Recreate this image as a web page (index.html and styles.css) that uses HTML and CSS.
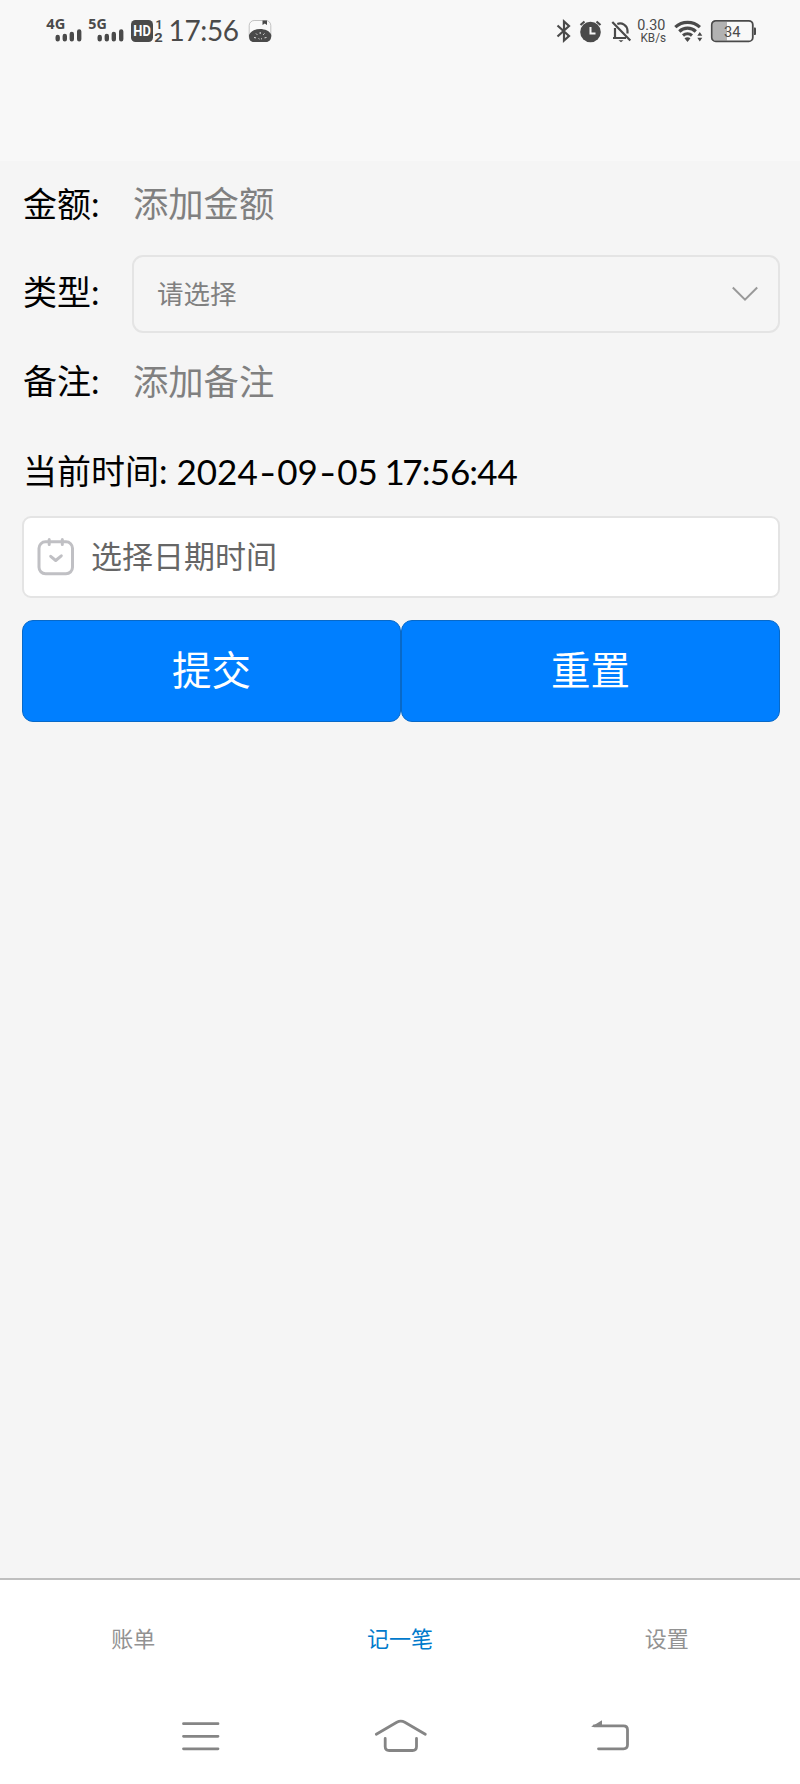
FILE: index.html
```html
<!DOCTYPE html>
<html lang="zh-CN">
<head>
<meta charset="utf-8">
<title>记一笔</title>
<link rel="stylesheet" href="styles.css">
</head>
<body>
<header class="header">
  <div class="status">
    <svg width="46" height="64" viewBox="40 0 46 64"><text x="46.3" y="29.3" class="net" textLength="19" lengthAdjust="spacingAndGlyphs">4G</text><path class="bars" d="M57.7 37v2.300M64.8 36v3.300M71.8 34v5.300M79.2 31.500v7.800"/></svg>
    <svg width="40" height="64" viewBox="86 0 40 64"><text x="88.3" y="29.3" class="net" textLength="18.5" lengthAdjust="spacingAndGlyphs">5G</text><path class="bars" d="M99.7 37v2.300M106.8 36v3.300M113.8 34v5.300M121.2 31.500v7.800"/></svg>
    <svg width="40" height="64" viewBox="126 0 40 64"><rect x="131" y="20" width="22" height="22" rx="4.5" class="solid"/><text x="133.3" y="36.3" class="hd" textLength="17.5" lengthAdjust="spacingAndGlyphs">HD</text><text x="155.5" y="29" class="sim">1</text><text x="154.3" y="41.7" class="sim" textLength="8.5" lengthAdjust="spacingAndGlyphs">2</text></svg>
    <svg width="76" height="64" viewBox="166 0 76 64"><text x="168.5" y="41.300" class="clock" textLength="70.5" lengthAdjust="spacing">17:56</text></svg>
    <svg width="38" height="64" viewBox="242 0 38 64"><rect x="249.2" y="20.5" width="21.6" height="21" rx="5" class="cup"/><path class="solid" d="M262.5 20.500h4.500v4.500l-2.200-1.500-2.300 1.500zM249 35c2-4 6-6 11-6s10 2 11.300 6c0 5-2.300 7-5.300 7h-12c-3.500 0-5-2-5-7z"/><path class="seeds" d="M254 37.500l2 .4M256 33.500l1.300 1.300M260.200 32v2M264.500 33.500l-1.300 1.300M266.500 37.500l-2 .4M258.500 38.500l1 .6M262 38.500l-1 .6"/></svg>
    <span class="spacer"></span>
    <svg width="26" height="64" viewBox="550 0 26 64"><path class="line" d="M557.500 25.500l11.500 10.500-5 4.500v-19l5 4.500-11.500 10.500"/></svg>
    <svg width="32" height="64" viewBox="576 0 32 64"><circle cx="590.500" cy="32" r="10.300" class="solid"/><path class="line" d="M580.500 25l4-3.500M600.500 25l-4-3.500"/><path class="hands" d="M590.500 27v6.500h5"/></svg>
    <svg width="26" height="64" viewBox="608 0 26 64"><path class="line" d="M612.300 22l18 18.500M615 28v10h11M613 38h2M617.300 24a7.500 7.500 0 0 1 10.200 6.500v3"/><path class="solid" d="M618.500 40.200h5l-2.500 2z"/></svg>
    <svg width="36" height="64" viewBox="634 0 36 64"><text x="637.300" y="30.300" class="speed" textLength="28" lengthAdjust="spacingAndGlyphs">0.30</text><text x="640.500" y="42" class="unit" textLength="25.500" lengthAdjust="spacingAndGlyphs">KB/s</text></svg>
    <svg width="36" height="64" viewBox="670 0 36 64"><path class="wave" d="M675.300 27.200a18 18 0 0 1 24.600 0M679.300 31.500a12 12 0 0 1 16.500 0M683 35.500a7 7 0 0 1 9 0"/><path class="solid" d="M684.500 38.300q3-2 6 0l-3 3.700zM697.300 35.800l2.500-3.800 2.500 3.800zM697.300 37.700l2.500 3.800 2.500-3.800z"/></svg>
    <svg width="56" height="64" viewBox="706 0 56 64"><rect x="713" y="22" width="14" height="18.500" class="level"/><rect x="711.800" y="20.800" width="41" height="20.600" rx="4" class="cell"/><path class="solid" d="M754 27.500h1q1 0 1 1v5.500q0 1-1 1h-1z"/><text x="724" y="36.500" class="percent" textLength="16.500" lengthAdjust="spacingAndGlyphs">34</text></svg>
  </div>
</header>

<main class="form">
  <div class="row">
    <label class="label">金额<span class="colon">:</span></label>
    <div class="input">添加金额</div>
  </div>
  <div class="row">
    <label class="label">类型<span class="colon">:</span></label>
    <div class="select">
      <span>请选择</span>
      <svg width="26" height="16" viewBox="0 0 26 16"><path class="chevron" d="M.8 1.500L13 13.600 25.200 1.500"/></svg>
    </div>
  </div>
  <div class="row">
    <label class="label">备注<span class="colon">:</span></label>
    <div class="input">添加备注</div>
  </div>
  <div class="now"><span>当前时间<span class="colon">:</span></span><span class="date">2024<span class="dash">-</span>09<span class="dash">-</span>05</span><span class="time"><span class="one">1</span>7<span class="sep">:</span>56<span class="sep">:</span>44</span></div>
  <div class="picker">
    <svg width="38" height="38" viewBox="0 0 38 38"><rect x="2" y="3.800" width="33.500" height="32" rx="6.500" class="cal"/><path class="cal" d="M12.200 1.500v5M25.300 1.500v5M13.700 18.300l5 4.200 5.600-4.700"/></svg>
    <span>选择日期时间</span>
  </div>
  <div class="actions">
    <button class="button">提交</button>
    <button class="button">重置</button>
  </div>
</main>

<nav class="tabs">
  <a class="tab">账单</a>
  <a class="tab active">记一笔</a>
  <a class="tab">设置</a>
</nav>
<footer class="system">
  <svg width="40" height="36" viewBox="181 1719 40 36"><path class="key" d="M183.500 1724.700h34.500M183.500 1737.300h34.500M183.500 1749.800h34.500"/></svg>
  <svg class="home" width="56" height="36" viewBox="373 1719 56 36"><path class="key" d="M376.300 1735.200l20.500-12q4-2.200 8 0l20.500 12M385.200 1739.500v8q0 4 4 4h23.300q4 0 4-4v-8"/></svg>
  <svg width="42" height="36" viewBox="590 1719 42 36"><path class="key" d="M594 1726.800h29.500q4 0 4 4v15q0 4-4 4h-25"/><path class="arrow" d="M591 1728l11-6.800v6.800z"/></svg>
</footer>
</body>
</html>
```
FILE: styles.css
```css
* { box-sizing: border-box; }
body {
  margin: 0;
  height: 1784px;
  display: flex;
  flex-direction: column;
  overflow: hidden;
  background: #f5f5f5;
  color: #000;
  font-family: Lato, "Noto Sans CJK SC", sans-serif;
}
svg { display: block; flex: none; }
.header { height: 161px; flex: none; background: #f8f8f8; }
.status { display: flex; height: 64px; padding-left: 40px; padding-right: 38px; }
.spacer { flex: 1; }
.solid { fill: #4a4a4a; }
.line { fill: none; stroke: #4a4a4a; stroke-width: 2.2; }
.bars { fill: none; stroke: #4a4a4a; stroke-width: 4.4; stroke-linecap: round; }
.net { font: 700 15px "Noto Sans", sans-serif; fill: #4a4a4a; }
.hd { font: 700 14px Roboto, sans-serif; fill: #fff; }
.sim { font: 700 12px Roboto, sans-serif; fill: #4a4a4a; }
.clock { font: 400 28px Lato, sans-serif; fill: #4a4a4a; }
.cup { fill: #fafafa; stroke: #aaa; stroke-width: .7; }
.seeds { stroke: #ddd; stroke-width: 1; fill: none; }
.hands { fill: none; stroke: #f7f7f7; stroke-width: 2; }
.speed { font: 400 14.5px Roboto, sans-serif; fill: #4a4a4a; }
.unit { font: 400 12px Roboto, sans-serif; fill: #4a4a4a; }
.wave { fill: none; stroke: #4a4a4a; stroke-width: 3.2; }
.level { fill: #b2b2b2; }
.cell { fill: none; stroke: #4a4a4a; stroke-width: 1.8; }
.percent { font: 400 14.5px Roboto, sans-serif; fill: #4a4a4a; }

.form { flex: 1; padding: 0 20px 0 22px; }
.row { display: flex; align-items: center; height: 89px; }
.row:first-child { height: 88px; }
.label { width: 110px; padding: 0 0 3px 1px; font-size: 34px; line-height: 50px; flex: none; }
.colon { font-family: Lato, sans-serif; }
.input { padding: 0 0 2px 1px; font-size: 35.3px; line-height: 52px; color: #808080; }
.select {
  flex: 1;
  height: 78px;
  display: flex;
  align-items: center;
  justify-content: space-between;
  padding: 0 20px 0 23px;
  border: 2px solid #e4e4e4;
  border-radius: 11px;
  font-size: 26.5px;
  color: #808080;
}
.select span { padding-bottom: 3px; }
.chevron { fill: none; stroke: #999; stroke-width: 2; }
.now { display: flex; align-items: center; height: 89px; padding: 0 0 4px 1px; font-size: 34px; white-space: nowrap; }
.date, .time { font-size: 35px; padding-top: 2px; }
.date { width: 208px; margin-left: 9px; }
.dash { display: inline-block; width: 19.5px; text-align: center; transform: scaleX(1.3); }
.one { letter-spacing: -2.500px; }
.sep { display: inline-block; width: 7px; text-indent: -1px; }
.picker {
  display: flex;
  align-items: center;
  gap: 16px;
  height: 82px;
  padding-left: 13px;
  border: 2px solid #e4e4e4;
  border-radius: 9px;
  background: #fff;
  color: #666;
  font-size: 31px;
}
.picker span { padding-bottom: 6px; }
.cal { fill: none; stroke: #c0c0c4; stroke-width: 3; stroke-linecap: round; stroke-linejoin: round; }
.actions { display: flex; margin-top: 22px; }
.button {
  flex: 1;
  height: 102px;
  padding: 0 0 8px;
  border: 1px solid #0869c8;
  border-radius: 11px;
  background: #007fff;
  color: #fff;
  font: 400 39.5px "Noto Sans CJK SC", sans-serif;
}
.tabs { display: flex; height: 122px; flex: none; padding-bottom: 7px; border-top: 2px solid #bfbfbf; background: #fff; }
.tab { flex: 1; display: flex; justify-content: center; align-items: center; font-size: 22px; color: #929292; }
.active { color: #007acc; }
.system { height: 84px; flex: none; display: flex; justify-content: space-between; padding: 18px 168px 0 181px; background: #fff; }
.home { margin-right: 9px; }
.key { fill: none; stroke: #858585; stroke-width: 2.8; stroke-linecap: round; }
.arrow { fill: #858585; }
```
